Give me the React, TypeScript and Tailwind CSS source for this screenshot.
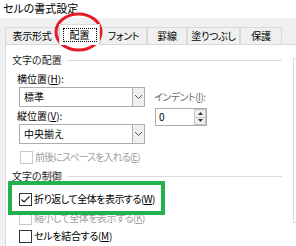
import React from "react";

const font = "font-['Noto_Sans_CJK_JP','Noto_Sans',sans-serif] [font-feature-settings:'palt']";

function Chevron() {
  return (
    <svg width="9" height="6" viewBox="0 0 9 6">
      <polyline points="1,1 4.5,4.5 8,1" fill="none" stroke="#555" strokeWidth="1" />
    </svg>
  );
}

function Select({ value }: { value: string }) {
  return (
    <div className="flex w-[126px] h-[20px] border border-[#adadad] bg-white">
      <div className="flex-1 pl-[4px] text-[10px] leading-[18px] text-black">{value}</div>
      <div className="w-[12px] border-l border-[#adadad] bg-[#f0f0f0] flex items-center justify-center">
        <Chevron />
      </div>
    </div>
  );
}

function Checkbox({ checked, disabled }: { checked?: boolean; disabled?: boolean }) {
  return (
    <div
      className={
        "w-[13px] h-[13px] border bg-white flex items-center justify-center shrink-0 " +
        (disabled ? "border-[#c8c8c8]" : "border-[#333333]")
      }
    >
      {checked && (
        <svg width="11" height="11" viewBox="0 0 11 11">
          <polyline points="1.5,5.5 4,8 9.5,2.5" fill="none" stroke="#222" strokeWidth="1.2" />
        </svg>
      )}
    </div>
  );
}

function GroupHeader({ label }: { label: string }) {
  return (
    <div className="flex items-center h-[14px] pl-[6px] mr-[11px]">
      <span className="text-[10px] leading-[14px] text-[#1e1e1e]">{label}</span>
      <div className="flex-1 h-px bg-[#dcdcdc] ml-[5px]" />
    </div>
  );
}

export default function App() {
  const tabs = [
    { label: "表示形式", w: "w-[54px]" },
    { label: "配置", w: "w-[41px]", active: true },
    { label: "フォント", w: "w-[47px]" },
    { label: "罫線", w: "w-[40px]" },
    { label: "塗りつぶし", w: "w-[53px]" },
    { label: "保護", w: "w-[42px]" },
  ];
  return (
    <div className={"relative w-[296px] h-[246px] overflow-hidden bg-white " + font}>
      <div className="h-[18px] pl-[3px] text-[11px] leading-[16px] text-black">セルの書式設定</div>
      <div className="h-[228px] bg-[#f0f0f0] pl-[5px] flex flex-col">
        <div className="h-[26px] flex items-end">
          {tabs.map((t) =>
            t.active ? (
              <div
                key={t.label}
                className={t.w + " h-[21px] -mb-px relative z-10 bg-white border-t border-l border-r border-[#d9d9d9] flex items-start justify-center pt-[3px]"}
              >
                <div className="border border-dotted border-black px-[6px] h-[14px] text-[10px] leading-[12px] text-black">
                  {t.label}
                </div>
              </div>
            ) : (
              <div
                key={t.label}
                className={t.w + " h-[17px] bg-[#f0f0f0] border-t border-l border-r border-[#d9d9d9] flex items-center justify-center text-[10px] leading-[14px] text-black tracking-[-0.3px]"}
              >
                {t.label}
              </div>
            )
          )}
        </div>
        <div className="flex-1 bg-white border-t border-l border-[#d9d9d9] flex">
          <div className="w-[287px] flex flex-col">
            <div className="mt-[8px]">
              <GroupHeader label="文字の配置" />
            </div>
            <div className="flex mt-[5px]">
              <div className="flex flex-col pl-[11px] w-[148px]">
                <div className="h-[14px] text-[10px] leading-[14px] text-black">
                  横位置(<span className="underline">H</span>):
                </div>
                <div className="mt-[1px] ml-[2px]">
                  <Select value="標準" />
                </div>
                <div className="mt-[2px] h-[14px] text-[10px] leading-[14px] text-black">
                  縦位置(<span className="underline">V</span>):
                </div>
                <div className="mt-[1px] ml-[2px]">
                  <Select value="中央揃え" />
                </div>
                <div className="mt-[6px] ml-[3px] flex items-center h-[14px]">
                  <Checkbox disabled />
                  <span className="ml-[2px] text-[10px] leading-[14px] text-[#a0a0a0] whitespace-nowrap tracking-[-0.9px]">
                    前後にスペースを入れる(<span className="underline">E</span>)
                  </span>
                </div>
              </div>
              <div className="flex flex-col">
                <div className="mt-[18px] h-[14px] text-[10px] leading-[14px] text-[#6d6d6d] tracking-[-0.5px]">
                  インデント(<span className="underline">I</span>):
                </div>
                <div className="mt-[4px] ml-[1px] w-[52px] h-[18px] border border-[#adadad] bg-white flex">
                  <div className="flex-1 pl-[3px] text-[10px] leading-[16px] text-black">0</div>
                  <div className="w-[12px] flex flex-col">
                    <div className="flex-1 border border-[#c4c4c4] bg-[#f0f0f0] flex items-center justify-center">
                      <svg width="5" height="3" viewBox="0 0 5 3"><polygon points="0,3 2.5,0 5,3" fill="#333" /></svg>
                    </div>
                    <div className="flex-1 border border-t-0 border-[#c4c4c4] bg-[#f0f0f0] flex items-center justify-center">
                      <svg width="5" height="3" viewBox="0 0 5 3"><polygon points="0,0 2.5,3 5,0" fill="#333" /></svg>
                    </div>
                  </div>
                </div>
              </div>
            </div>
            <div className="mt-[5px]">
              <GroupHeader label="文字の制御" />
            </div>
            <div className="mt-[9px] ml-[13px] flex items-center h-[14px]">
              <Checkbox checked />
              <span className="ml-[2px] text-[10px] leading-[14px] text-black whitespace-nowrap tracking-[-0.5px]">
                折り返して全体を表示する(<span className="underline">W</span>)
              </span>
            </div>
            <div className="mt-[5px] ml-[13px] flex items-center h-[14px]">
              <Checkbox disabled />
              <span className="ml-[2px] text-[10px] leading-[14px] text-[#a0a0a0] whitespace-nowrap tracking-[-0.5px]">
                縮小して全体を表示する(<span className="underline">K</span>)
              </span>
            </div>
            <div className="mt-[4px] ml-[13px] flex items-center h-[14px]">
              <Checkbox />
              <span className="ml-[2px] text-[10px] leading-[14px] text-black whitespace-nowrap tracking-[-0.3px]">
                セルを結合する(<span className="underline">M</span>)
              </span>
            </div>
          </div>
          <div className="mt-[13px] h-[165px] flex-1 border-l border-t border-b border-[#dcdcdc]" />
        </div>
      </div>
      <svg className="absolute left-[54px] top-[12px] pointer-events-none" width="49" height="40" viewBox="0 0 49 40">
        <ellipse cx="24.5" cy="20" rx="22.5" ry="18" fill="none" stroke="#e31b23" strokeWidth="3" />
      </svg>
      <div className="absolute left-[8px] top-[181px] w-[157px] h-[34px] border-[4px] border-[#22b14c] pointer-events-none" />
    </div>
  );
}
